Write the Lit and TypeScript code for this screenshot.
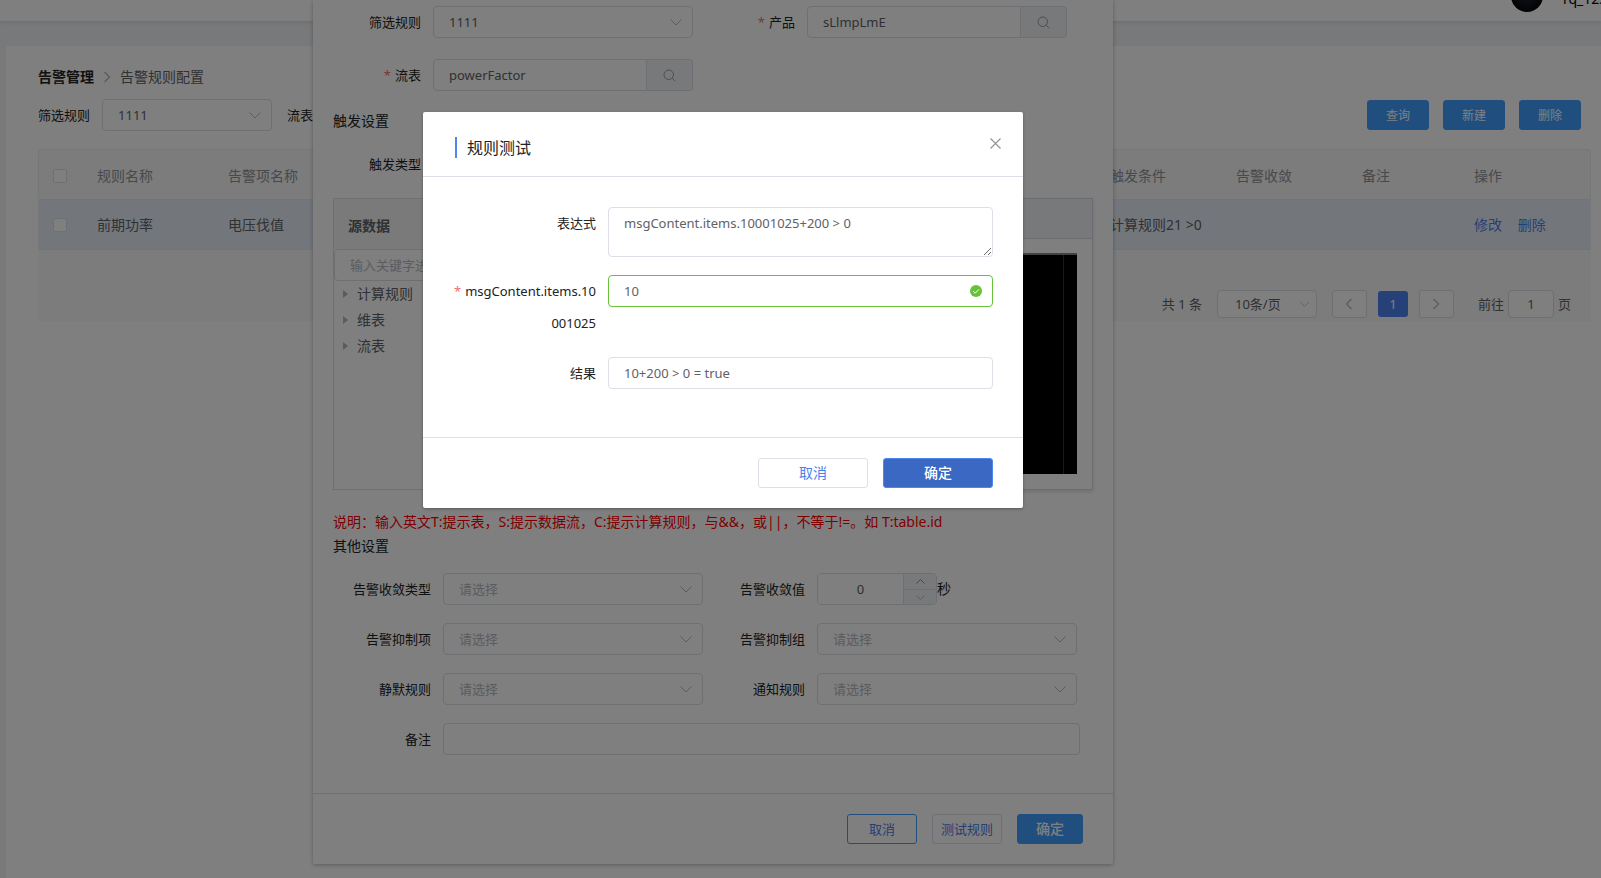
import { LitElement, html, css } from "lit";
import { customElement } from "lit/decorators.js";

const chevronDown = html`<svg class="chev" viewBox="0 0 14 14" aria-hidden="true"><path d="M1.5 4.5 7 10l5.500-5.500" fill="none" stroke="currentColor"/></svg>`;
const chevronRight = html`<svg class="arrow" viewBox="0 0 14 14" aria-hidden="true"><path d="M4.500 2 9.500 7l-5 5" fill="none" stroke="currentColor" stroke-width="1.300"/></svg>`;
const chevronLeft = html`<svg class="arrow" viewBox="0 0 14 14" aria-hidden="true"><path d="M9.500 2 4.500 7l5 5" fill="none" stroke="currentColor" stroke-width="1.300"/></svg>`;
const searchIcon = html`<svg class="glass" viewBox="0 0 14 14" aria-hidden="true"><circle cx="6.200" cy="6.200" r="5.100" fill="none" stroke="currentColor"/><path d="m10 10 3.200 3.200" stroke="currentColor"/></svg>`;

const selectBox = (id: string, value: string, placeholder = false) => html`
  <div class="select">
    <select id=${id} class=${placeholder ? "control placeholder" : "control"}>
      <option>${value}</option>
    </select>
    ${chevronDown}
  </div>`;

const searchBox = (id: string, value: string) => html`
  <div class="search">
    <input id=${id} class="control" .value=${value} />
    <button class="append" aria-label="搜索">${searchIcon}</button>
  </div>`;

@customElement("app-root")
export class AppRoot extends LitElement {
  static styles = css`
    :host {
      display: block;
      position: relative;
      height: 100vh;
      overflow: hidden;
      background: #eff2f6;
      font: 14px/20px "Noto Sans", "Noto Sans CJK SC", sans-serif;
      color: #606266;
    }
    * { box-sizing: border-box; }
    button, input, select, textarea { font: inherit; color: inherit; margin: 0; }
    a { color: #4c80ea; text-decoration: none; }
    svg { display: block; }

    .page { display: flex; flex-direction: column; height: 100%; }
    .topbar {
      display: flex;
      justify-content: flex-end;
      align-items: flex-end;
      gap: 20px;
      height: 21px;
      flex: none;
      overflow: hidden;
      background: #fff;
      box-shadow: 0 1px 4px rgba(0, 21, 41, 0.12);
      color: #000;
      white-space: nowrap;
    }
    .avatar { width: 32px; height: 32px; flex: none; border-radius: 50%; background: radial-gradient(#20242c, #04060c 70%); margin-bottom: 9px; }
    .user { width: 38px; overflow: hidden; padding-bottom: 12px; }
    .card { flex: 1; margin: 25px 0 0 6px; padding: 21px 10px 0 32px; background: #fff; }
    .crumbs { display: flex; align-items: center; gap: 6px; height: 20px; }
    .crumbs a { font-weight: 700; color: #222; }
    .crumbs .arrow { color: #b4b8bf; }
    .filters { display: flex; align-items: center; gap: 12px; margin-top: 12px; height: 32px; font-size: 13px; color: #222; }
    .filters .select { width: 170px; margin-right: 3px; }
    .actions { display: flex; gap: 14px; margin-left: auto; padding-right: 10px; }
    .actions .btn { width: 62px; padding-top: 1px; font-size: 12px; }

    .btn { height: 30px; padding: 0; border: 1px solid #dcdfe6; border-radius: 3px; background: #fff; color: #4c80ea; text-align: center; }
    .btn.fill { border-color: #409eff; background: #409eff; color: #fff; }

    .list { margin-top: 18px; border-radius: 4px 4px 0 0; background: #f8f8f8; }
    .table { width: 100%; border-collapse: separate; border-spacing: 0; table-layout: fixed; border: 1px solid #ebeef5; border-radius: 4px 4px 0 0; border-bottom: 0; }
    .table th, .table td { height: 50px; padding: 0 10px; text-align: left; font-weight: 400; border-bottom: 1px solid #e3e8f0; }
    .table th { padding-top: 3px; color: #909399; }
    .table td { background: #e7eef9; color: #606266; }
    .table input { display: block; appearance: none; width: 14px; height: 14px; margin-left: 4px; border: 1px solid #dcdfe6; border-radius: 2px; background: #fff; }
    .table a + a { margin-left: 12px; }
    .c-check { width: 48px; }
    .c-name { width: 131px; }
    .c-cond, .c-conv { width: 126px; }
    .c-note { width: 112px; }
    .c-ops { width: 126px; }
    .pager { display: flex; align-items: center; justify-content: flex-end; height: 71px; padding: 40px 20px 3px 0; font-size: 13px; }
    .pager .control { height: 28px; }
    .pager .select { width: 100px; margin: 0 15px; }
    .pager .select .control { padding-left: 17px; }
    .pager .chev { width: 11px; right: 7px; }
    .step { display: grid; place-items: center; width: 35px; height: 28px; padding: 0; border: 1px solid #dcdfe6; border-radius: 3px; background: #fff; color: #b4b8bf; }
    .step.current { width: 30px; height: 26px; margin: 0 11px; border: 0; background: #4c80f0; color: #fff; }
    .jump { display: flex; align-items: center; gap: 4px; margin-left: 24px; }
    .jump .control { width: 46px; padding: 0; text-align: center; }

    .arrow { width: 14px; height: 14px; }
    .control { display: block; width: 100%; height: 32px; padding: 0 15px; border: 1px solid #dcdfe6; border-radius: 4px; background: #fff; color: #606266; font-size: 13px; outline: none; }
    select.control { appearance: none; }
    .placeholder, .control::placeholder { color: #b4b8bf; opacity: 1; }
    .select { position: relative; flex: none; }
    .chev { position: absolute; right: 10px; top: 50%; width: 14px; translate: 0 -50%; color: #b4b8bf; pointer-events: none; }
    .search { display: flex; }
    .search .control { flex: 1; width: auto; min-width: 0; border-radius: 4px 0 0 4px; }
    .append { display: grid; place-items: center; width: 46px; height: 32px; padding: 0; border: 1px solid #dcdfe6; border-left: 0; border-radius: 0 4px 4px 0; background: #f0f3f7; color: #909399; }
    .glass { width: 13px; height: 13px; }

    .layer { position: absolute; inset: 0; display: flex; justify-content: center; align-items: flex-start; }
    .editor-layer { padding-right: 175px; }
    .test-layer { padding: 112px 155px 0 0; background: rgba(0, 0, 0, 0.5); }

    .dialog { width: 800px; background: #fff; box-shadow: 0 1px 4px rgba(0, 0, 0, 0.3); border-radius: 0 0 2px 2px; }
    .body { padding: 6px 20px 38px; }
    .grid { display: grid; grid-template-columns: 360px 1fr; column-gap: 14px; }
    .field { display: grid; grid-template-columns: 100px 260px; align-items: center; }
    .field label, .trigger { padding-right: 12px; text-align: right; font-size: 13px; color: #222; }
    .req::before { content: "*"; margin-right: 4px; color: #f56c6c; }
    .top { row-gap: 21px; }
    .h { margin: 0; font-size: 14px; line-height: 20px; font-weight: 400; color: #222; }
    .h.first { margin-top: 20px; }
    .trigger { width: 100px; margin-top: 23px; }

    .panels { display: flex; gap: 20px; height: 292px; margin-top: 24px; }
    .source { width: 240px; border: 1px solid #dcdfe6; }
    .source h3 { margin: 0; height: 50px; padding-left: 14px; font-size: 14px; line-height: 54px; background: #f5f5f5; color: #606266; }
    .tree { list-style: none; margin: 0; padding: 0; }
    .tree li { display: flex; align-items: center; gap: 9px; height: 26px; padding-left: 9px; }
    .tree li::before { content: ""; border: 4px solid transparent; border-left: 5px solid #b4b8bf; border-right: 0; }
    .code { flex: 1; display: flex; flex-direction: column; border: 1px solid #d4d9e3; box-shadow: 0 2px 4px rgba(0, 0, 0, 0.12); }
    .code header { height: 40px; border-bottom: 1px solid #d4d9e3; background: #eff2f6; }
    .canvas { flex: 1; margin: 14px 15px 15px; background: #000; border-top: 2px solid #858585; padding-right: 13px; }
    .canvas div { height: 100%; border-right: 1px solid #333; }
    .hint { margin: 22px 0 4px; color: #f00; }
    .rest { row-gap: 18px; margin-top: 17px; }
    .rest .field { grid-template-columns: 110px 260px; }
    .rest .wide { grid-column: 1 / -1; grid-template-columns: 110px 637px; }
    .num { display: flex; align-items: center; color: #222; }
    .stepper { display: flex; width: 120px; height: 32px; border: 1px solid #dcdfe6; border-radius: 4px; overflow: hidden; }
    .stepper input { width: 85px; padding: 0; border: 0; text-align: center; font-size: 13px; color: #606266; background: #fff; outline: none; }
    .spin { flex: 1; display: grid; grid-template-rows: 1fr 1fr; border-left: 1px solid #dcdfe6; }
    .spin button { display: grid; place-items: center; min-height: 0; padding: 0; border: 0; background: #f0f3f7; color: #909399; }
    .spin button + button { border-top: 1px solid #dcdfe6; color: #b4b8bf; }
    .spin svg { width: 9px; height: 9px; }
    .foot { display: flex; justify-content: flex-end; gap: 15px; padding: 20px 30px; border-top: 1px solid #dcdfe6; }
    .foot .btn { width: 70px; font-size: 13px; }
    .foot .btn.outline { border-color: #409eff; }
    .foot .btn.fill { width: 66px; font-size: 14px; font-weight: 500; }

    .modal { width: 600px; background: #fff; border-radius: 2px; box-shadow: 0 1px 3px rgba(0, 0, 0, 0.3); color: #222; }
    .modal-head { display: flex; align-items: center; height: 65px; padding: 6px 21px 0 32px; border-bottom: 1px solid #dcdfe6; }
    .modal-head h2 { margin: 0; padding: 1px 0 0 10px; border-left: 2px solid #4b87ed; font-size: 16px; line-height: 20px; font-weight: 400; color: #222; }
    .close { margin: 0 0 8px auto; padding: 0; border: 0; background: none; color: #909399; }
    .close svg { width: 13px; height: 13px; }
    .modal-body { display: grid; gap: 18px; padding: 30px 30px 48px; }
    .row { display: grid; grid-template-columns: 155px 1fr; align-items: start; }
    .row label { padding-right: 12px; text-align: right; font-size: 13px; line-height: 32px; color: #222; }
    .row textarea.control { height: 50px; padding: 5px 15px; line-height: 20px; resize: vertical; }
    .valid { position: relative; }
    .valid .control { border-color: #67c23a; }
    .valid svg { position: absolute; right: 11px; top: 10px; width: 12px; height: 12px; }
    .modal .foot .btn { width: 110px; font-size: 14px; }
    .modal .foot .btn.fill { border-color: #4b87ed; background: #3a68c2; }
  `;

  render() {
    return html`
      <div class="page">
        <header class="topbar"><span class="avatar"></span><span class="user">rq_123</span></header>
        <main class="card">
          <nav class="crumbs"><a href="#">告警管理</a>${chevronRight}<span>告警规则配置</span></nav>
          <div class="filters">
            <label for="f-rule">筛选规则</label>
            ${selectBox("f-rule", "1111")}
            <span>流表</span>
            <div class="actions">
              <button class="btn fill">查询</button>
              <button class="btn fill">新建</button>
              <button class="btn fill">删除</button>
            </div>
          </div>
          <section class="list">
            <table class="table">
              <colgroup>
                <col class="c-check" /><col class="c-name" /><col />
                <col class="c-cond" /><col class="c-conv" /><col class="c-note" /><col class="c-ops" />
              </colgroup>
              <thead>
                <tr>
                  <th><input type="checkbox" aria-label="全选" /></th>
                  <th>规则名称</th><th>告警项名称</th><th>触发条件</th><th>告警收敛</th><th>备注</th><th>操作</th>
                </tr>
              </thead>
              <tbody>
                <tr>
                  <td><input type="checkbox" aria-label="选择" /></td>
                  <td>前期功率</td><td>电压伐值</td><td>计算规则21 &gt;0</td><td></td><td></td>
                  <td><a href="#">修改</a> <a href="#">删除</a></td>
                </tr>
              </tbody>
            </table>
            <div class="pager">
              <span>共 1 条</span>
              ${selectBox("page-size", "10条/页")}
              <button class="step" aria-label="上一页">${chevronLeft}</button>
              <button class="step current">1</button>
              <button class="step" aria-label="下一页">${chevronRight}</button>
              <label class="jump">前往<input class="control" value="1" />页</label>
            </div>
          </section>
        </main>
      </div>

      <div class="layer editor-layer">
        <section class="dialog" role="dialog">
          <div class="body">
            <div class="grid top">
              <div class="field"><label for="d-rule">筛选规则</label>${selectBox("d-rule", "1111")}</div>
              <div class="field"><label class="req" for="d-prod">产品</label>${searchBox("d-prod", "sLlmpLmE")}</div>
              <div class="field"><label class="req" for="d-flow">流表</label>${searchBox("d-flow", "powerFactor")}</div>
            </div>
            <h3 class="h first">触发设置</h3>
            <div class="trigger">触发类型</div>
            <div class="panels">
              <div class="source">
                <h3>源数据</h3>
                <input class="control" aria-label="关键字" placeholder="输入关键字进行过滤" />
                <ul class="tree"><li>计算规则</li><li>维表</li><li>流表</li></ul>
              </div>
              <div class="code"><header></header><div class="canvas"><div></div></div></div>
            </div>
            <p class="hint">说明：输入英文T:提示表，S:提示数据流，C:提示计算规则，与&amp;&amp;，或||，不等于!=。如 T:table.id</p>
            <h3 class="h">其他设置</h3>
            <div class="grid rest">
              <div class="field"><label for="r1">告警收敛类型</label>${selectBox("r1", "请选择", true)}</div>
              <div class="field">
                <label for="r2">告警收敛值</label>
                <div class="num">
                  <div class="stepper">
                    <input id="r2" value="0" />
                    <div class="spin">
                      <button aria-label="增加"><svg viewBox="0 0 9 9"><path d="M.5 6.500 4.500 2.500l4 4" fill="none" stroke="currentColor"/></svg></button>
                      <button aria-label="减少"><svg viewBox="0 0 9 9"><path d="m.5 2.500 4 4 4-4" fill="none" stroke="currentColor"/></svg></button>
                    </div>
                  </div>秒
                </div>
              </div>
              <div class="field"><label for="r3">告警抑制项</label>${selectBox("r3", "请选择", true)}</div>
              <div class="field"><label for="r4">告警抑制组</label>${selectBox("r4", "请选择", true)}</div>
              <div class="field"><label for="r5">静默规则</label>${selectBox("r5", "请选择", true)}</div>
              <div class="field"><label for="r6">通知规则</label>${selectBox("r6", "请选择", true)}</div>
              <div class="field wide"><label for="r7">备注</label><input id="r7" class="control" /></div>
            </div>
          </div>
          <footer class="foot">
            <button class="btn outline">取消</button>
            <button class="btn">测试规则</button>
            <button class="btn fill">确定</button>
          </footer>
        </section>
      </div>

      <div class="layer test-layer">
        <section class="modal" role="dialog" aria-labelledby="t">
          <header class="modal-head">
            <h2 id="t">规则测试</h2>
            <button class="close" aria-label="关闭"><svg viewBox="0 0 13 13"><path d="m1.500 1.500 10 10m0-10-10 10" stroke="currentColor" stroke-width="1.200"/></svg></button>
          </header>
          <div class="modal-body">
            <div class="row"><label for="m1">表达式</label><textarea id="m1" class="control" .value=${"msgContent.items.10001025+200 > 0"}></textarea></div>
            <div class="row">
              <label class="req" for="m2">msgContent.items.10<br />001025</label>
              <div class="valid">
                <input id="m2" class="control" value="10" />
                <svg viewBox="0 0 12 12"><circle cx="6" cy="6" r="6" fill="#67c23a"/><path d="m3.200 6.200 2 2 3.800-3.900" fill="none" stroke="#fff"/></svg>
              </div>
            </div>
            <div class="row"><label for="m3">结果</label><input id="m3" class="control" .value=${"10+200 > 0 = true"} /></div>
          </div>
          <footer class="foot">
            <button class="btn">取消</button>
            <button class="btn fill">确定</button>
          </footer>
        </section>
      </div>
    `;
  }
}
